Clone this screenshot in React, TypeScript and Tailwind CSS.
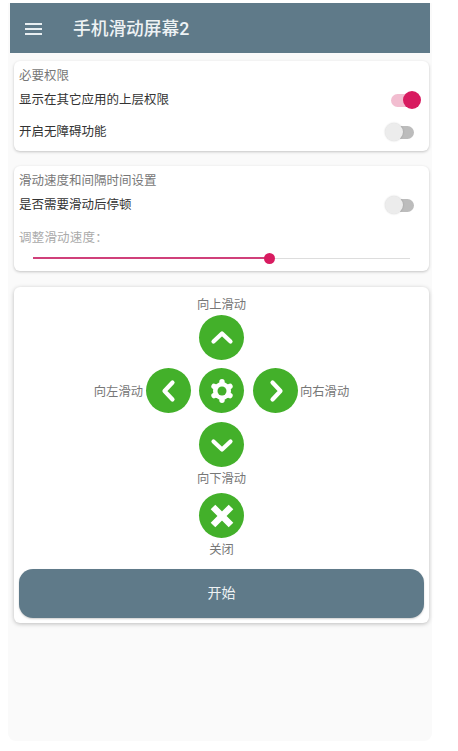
const font = { fontFamily: '"Roboto", "Noto Sans CJK SC", sans-serif' };

function Toggle({ on = false }: { on?: boolean }) {
  return (
    <div className="relative w-[29px] h-[20px] flex items-center shrink-0">
      <div className={`h-[13px] rounded-full ${on ? "w-[24px] bg-[#f2bdd0]" : "ml-[5px] w-[24px] bg-[#bcbcbc]"}`} />
      <div
        className={`absolute top-px w-[18px] h-[18px] rounded-full ${
          on ? "right-[-1px] bg-[#d81b60]" : "left-0 bg-[#ececec] shadow-[0_0_2px_rgba(0,0,0,0.2)]"
        }`}
      />
    </div>
  );
}

function Circle({ children }: { children: React.ReactNode }) {
  return (
    <div className="w-[45px] h-[45px] rounded-full bg-[#43b02a] flex items-center justify-center shrink-0">
      <svg width="26" height="26" viewBox="0 0 26 26" fill="none" stroke="#fff" strokeWidth="4.2" strokeLinecap="round" strokeLinejoin="round">
        {children}
      </svg>
    </div>
  );
}

function Gear() {
  return (
    <Circle>
      <circle cx="13" cy="13" r="9" fill="#fff" stroke="none" />
      <g strokeWidth="5.4">
        <path d="M13 13V3.800" />
        <path d="M13 13V3.800" transform="rotate(60 13 13)" />
        <path d="M13 13V3.800" transform="rotate(120 13 13)" />
        <path d="M13 13V3.800" transform="rotate(180 13 13)" />
        <path d="M13 13V3.800" transform="rotate(240 13 13)" />
        <path d="M13 13V3.800" transform="rotate(300 13 13)" />
      </g>
      <circle cx="13" cy="13" r="4.500" fill="#43b02a" stroke="none" />
    </Circle>
  );
}

export default function App() {
  return (
    <div className="w-[458px] h-[751px] bg-white pt-[3px]" style={font}>
      <div className="ml-[8px] w-[424px] h-[738px] bg-[#fafafa] rounded-b-lg">
        <header className="mx-[2px] h-[50px] bg-[#5f7a89] flex items-center pt-[2px]">
          <svg width="17" height="12" viewBox="0 0 17 12" className="ml-[15px]" fill="#e8eef1">
            <rect y="0" width="17" height="2" />
            <rect y="5" width="17" height="2" />
            <rect y="10" width="17" height="2" />
          </svg>
          <h1 className="ml-[31px] text-[17.7px] font-medium text-[#eef2f4]">手机滑动屏幕2</h1>
        </header>

        <section className="mt-[8px] ml-[6px] w-[415px] h-[90px] bg-white rounded-md shadow-[0_1px_3px_rgba(0,0,0,0.22)] px-[5px] pt-[7px] text-[12.5px]">
          <p className="leading-[16px] text-[#777]">必要权限</p>
          <div className="mt-[5px] flex items-center justify-between h-[22px] pr-[4px]">
            <span className="text-[#333]">显示在其它应用的上层权限</span>
            <Toggle on />
          </div>
          <div className="mt-[10px] flex items-center justify-between h-[22px] pr-[10px]">
            <span className="text-[#333]">开启无障碍功能</span>
            <Toggle />
          </div>
        </section>

        <section className="mt-[15px] ml-[6px] w-[415px] h-[105px] bg-white rounded-md shadow-[0_1px_3px_rgba(0,0,0,0.22)] px-[5px] pt-[7px] text-[12.5px]">
          <p className="leading-[16px] text-[#777]">滑动速度和间隔时间设置</p>
          <div className="mt-[5px] flex items-center justify-between h-[22px] pr-[10px]">
            <span className="text-[#333]">是否需要滑动后停顿</span>
            <Toggle />
          </div>
          <p className="mt-[14px] leading-[16px] text-[#aaa] tracking-[0.2px]">调整滑动速度：</p>
          <div className="relative mt-[7px] ml-[14px] w-[377px] h-[10px] flex items-center">
            <div className="w-[237px] h-[2px] bg-[#d0407a]" />
            <div className="flex-1 h-px bg-[#ddd]" />
            <div className="absolute left-[231px] top-0 w-[11px] h-[11px] rounded-full bg-[#d81b60]" />
          </div>
        </section>

        <section className="mt-[16px] ml-[6px] w-[415px] h-[336px] bg-white rounded-md shadow-[0_1px_4px_rgba(0,0,0,0.25)] px-[5px] pt-[10px] flex flex-col items-center text-[12.3px] text-[#777]">
          <span className="leading-[16px]">向上滑动</span>
          <div className="mt-[2px]">
            <Circle><path d="M4.500 16.500L13 8.500 21.500 16.500" /></Circle>
          </div>
          <div className="mt-[8px] flex items-center">
            <span className="mr-[3px] mt-[3px]">向左滑动</span>
            <Circle><path d="M16.500 4.500L8.500 13 16.500 21.500" /></Circle>
            <div className="ml-[8px] mr-[9px]"><Gear /></div>
            <Circle><path d="M9.500 4.500L17.500 13 9.500 21.500" /></Circle>
            <span className="ml-[2px] mt-[3px]">向右滑动</span>
          </div>
          <div className="mt-[9px]">
            <Circle><path d="M4.500 9.500L13 17.500 21.500 9.500" /></Circle>
          </div>
          <span className="mt-[4px] leading-[16px]">向下滑动</span>
          <div className="mt-[6px]">
            <Circle>
              <path d="M4 4l18 18M22 4L4 22" strokeWidth="6.500" strokeLinecap="butt" />
            </Circle>
          </div>
          <span className="mt-[4px] leading-[16px]">关闭</span>
          <button className="mt-[11px] w-[405px] h-[49px] rounded-[14px] bg-[#5f7a89] text-[#eef2f4] text-[14px] shadow-[0_1px_2px_rgba(0,0,0,0.2)]">
            开始
          </button>
        </section>
      </div>
    </div>
  );
}
